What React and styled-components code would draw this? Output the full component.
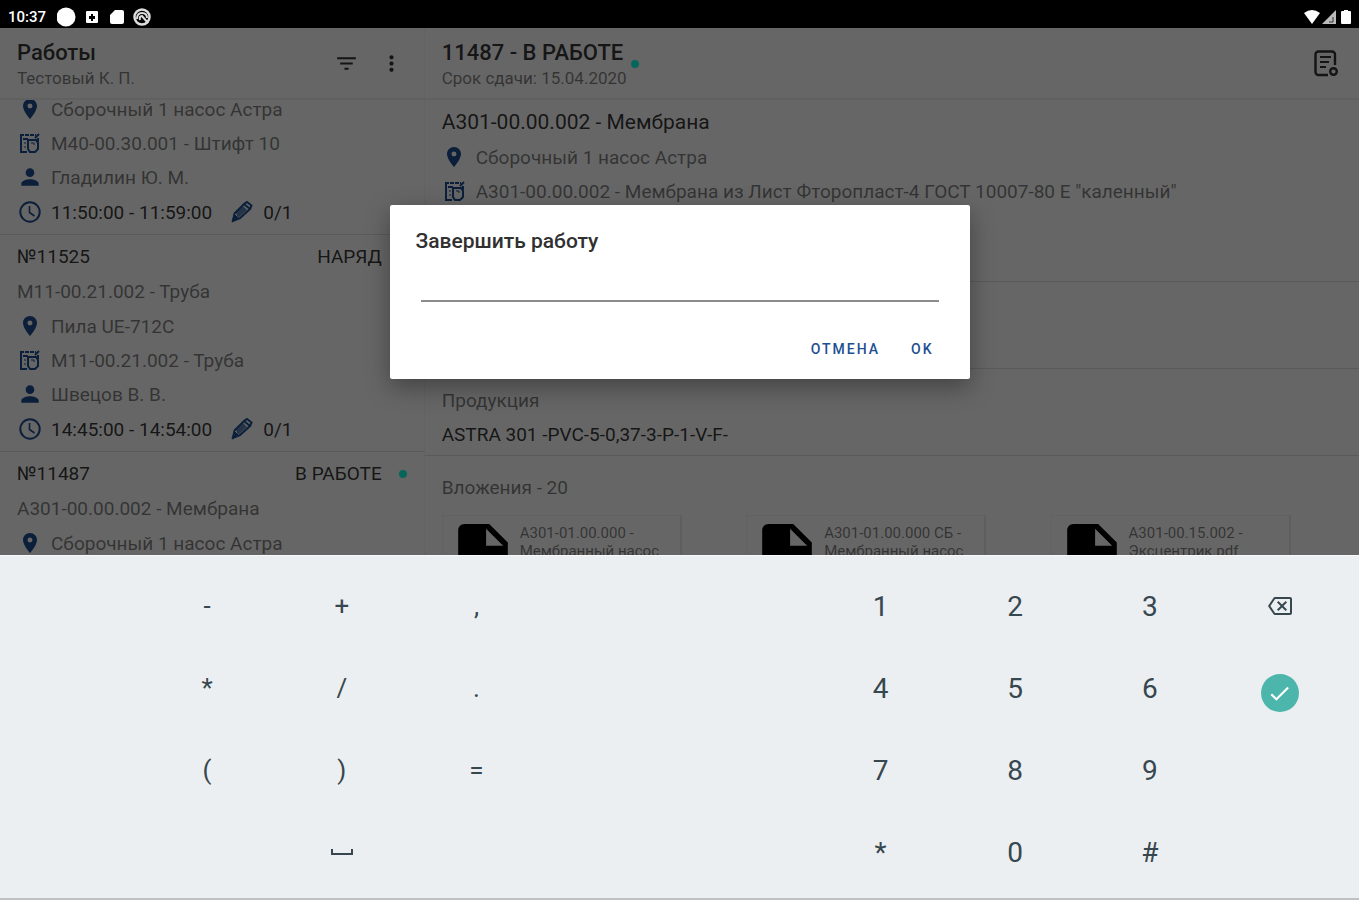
import React, { useLayoutEffect, useRef } from 'react'
import styled, { createGlobalStyle } from 'styled-components';
import { MdFilterList, MdMoreVert, MdPlace, MdPerson, MdOutlineBackspace, MdCheck } from 'react-icons/md';

const COLORS = {
    primary: '#1d4f91',
    accent: '#10ffe4',
    text: 'rgba(0, 0, 0, 0.8)',
    muted: 'rgba(0, 0, 0, 0.5)',
    line: '#e0e0e0',
    keyboard: '#eceff1',
    key: '#37474f',
};

const GlobalStyle = createGlobalStyle`
    * {
        box-sizing: border-box;
    }

    body {
        margin: 0;
        font-family: Roboto, 'Noto Sans', sans-serif;
        background: #000;
    }

    h1, h2, h3, p, ul {
        margin: 0;
        padding: 0;
        font-weight: 400;
    }

    button {
        border: 0;
        padding: 0;
        background: none;
        font-family: inherit;
        cursor: pointer;
    }

    svg {
        display: block;
        flex: none;
    }
`;

const Screen = styled.div`
    display: flex;
    flex-direction: column;
    height: 100vh;
    overflow: hidden;
`;

const StatusBar = styled.div`
    display: flex;
    align-items: center;
    justify-content: space-between;
    height: 28px;
    padding: 5px 8px 0;
    flex: none;
    background: #000;
    color: #fff;
`;

const StatusGroup = styled.div`
    display: flex;
    align-items: center;
    gap: 11px;
`;

const Clock = styled.span`
    font-size: 15px;
    font-weight: 500;
    line-height: 20px;
`;

const Workspace = styled.div`
    position: relative;
    display: flex;
    flex: 1;
    min-height: 0;
    overflow: hidden;
    background: #fff;
`;

const Sidebar = styled.aside`
    display: flex;
    flex-direction: column;
    width: 31.25%;
    min-width: 320px;
    flex: none;
    border-right: 1px solid #f4f4f4;
    min-height: 0;
`;

const Detail = styled.main`
    flex: 1;
    min-width: 0;
    overflow: hidden;
`;

const Header = styled.header`
    display: flex;
    align-items: center;
    justify-content: space-between;
    height: 72px;
    padding: 1px 20px 0 17px;
    flex: none;
    border-bottom: 2px solid #f0f0f0;
    color: ${COLORS.text};
`;

const HeaderTitle = styled.h1`
    font-size: 22px;
    font-weight: 500;
    line-height: 28px;
`;

const HeaderNote = styled.p`
    font-size: 17px;
    line-height: 22px;
    color: ${COLORS.muted};
`;

const HeaderActions = styled.div`
    display: flex;
    gap: 20px;
`;

const IconButton = styled.button`
    display: grid;
    place-items: center;
    color: #333;
`;

const Dot = styled.span`
    width: 8px;
    height: 8px;
    border-radius: 50%;
    background: ${COLORS.accent};
`;

const TitleWithDot = styled.div`
    display: flex;
    align-items: center;
    gap: 4px;
`;

const JobList = styled.ul`
    flex: 1;
    min-height: 0;
    padding-bottom: 24px;
    overflow-y: auto;
    list-style: none;
    scrollbar-width: none;
`;

const JobCard = styled.li`
    padding: 4px 17px;
    border-bottom: 1px solid ${COLORS.line};
`;

const Line = styled.div`
    display: flex;
    align-items: center;
    height: ${props => props.$height || 34}px;
    gap: 9px;
    font-size: ${props => (props.$large ? 21 : 19)}px;
    color: ${props => (props.$strong ? COLORS.text : COLORS.muted)};
    white-space: nowrap;
`;

const IconSlot = styled.span`
    display: grid;
    place-items: center;
    width: 25px;
    color: ${COLORS.primary};
`;

const Status = styled.span`
    display: flex;
    align-items: center;
    margin-left: auto;
    gap: 17px;
    padding-right: ${props => (props.$active ? 0 : 25)}px;
`;

const Count = styled.span`
    display: flex;
    align-items: center;
    gap: 9px;
    margin-left: 8px;
`;

const Section = styled.section`
    min-height: 87px;
    padding: ${props => props.$padding || '14px 17px 4px'};
    border-bottom: ${props => (props.$last ? 0 : 1)}px solid ${COLORS.line};
`;

const Files = styled.div`
    display: grid;
    grid-template-columns: repeat(3, 1fr);
    margin-top: 11px;
`;

const FileCard = styled.a`
    display: flex;
    gap: 12px;
    width: 240px;
    height: 80px;
    padding: 8px 15px;
    border: 1px solid #f4f4f4;
    border-right: 2px solid #ececec;
    color: ${COLORS.muted};
    font-size: 15px;
    line-height: 18px;
    text-decoration: none;
`;

const Scrim = styled.div`
    position: absolute;
    inset: 0;
    display: grid;
    place-items: center;
    background: rgba(0, 0, 0, 0.6);
`;

const Dialog = styled.form`
    width: 580px;
    max-width: 90%;
    padding: 20px 26px 14px;
    border-radius: 2px;
    background: #fff;
    box-shadow: 0 8px 24px rgba(0, 0, 0, 0.35);
`;

const DialogTitle = styled.label`
    display: block;
    font-size: 21px;
    font-weight: 500;
    line-height: 32px;
    color: #303030;
`;

const DialogInput = styled.input`
    display: block;
    width: calc(100% - 10px);
    height: 32px;
    margin: 13px 5px 0;
    padding: 0;
    border: 0;
    border-bottom: 2px solid #8c8c8c;
    outline: none;
    font: inherit;
    font-size: 19px;
`;

const DialogActions = styled.div`
    display: flex;
    justify-content: flex-end;
    gap: 31px;
    margin-top: 31px;
    padding-right: 10px;
`;

const DialogButton = styled.button`
    font-size: 14px;
    font-weight: 500;
    line-height: 32px;
    letter-spacing: 2px;
    color: ${COLORS.primary};
`;

const Keyboard = styled.div`
    display: grid;
    grid-template-columns: 123fr repeat(8, 135fr) 125fr;
    grid-auto-rows: 82px;
    flex: none;
    padding: 9px 17px 5px;
    border-top: 1px solid #f8f9fa;
    border-bottom: 2px solid #bfc2c4;
    background: ${COLORS.keyboard};
`;

const Key = styled.button`
    display: grid;
    place-items: center;
    font-size: ${props => (props.$digit ? 28 : 26)}px;
    color: ${COLORS.key};
`;

const EnterBadge = styled.span`
    display: grid;
    place-items: center;
    width: 38px;
    height: 38px;
    margin-top: 10px;
    border-radius: 50%;
    background: #4db6ac;
    color: #fff;
`;

const PartIcon = () => (
    <svg width="21" height="21" viewBox="0 0 21 21" fill="none" stroke="currentColor" strokeWidth="2">
        <path d="M1 2h16" strokeDasharray="4 1" />
        <path d="M2 1v19M1 19h7M4 6h5" />
        <path d="M5 10h2M5 14h2" strokeWidth="1" />
        <path d="M16 5l4-4M19 5v4" />
        <path d="M9 7h8l2 3v6l-3 3h-5l-2-3z" />
        <path d="M12 10h3v2" strokeWidth="1" />
    </svg>
);

const ClockIcon = () => (
    <svg width="22" height="22" viewBox="0 0 22 22" fill="none" stroke="currentColor" strokeWidth="2">
        <circle cx="11" cy="11" r="9.7" />
        <path d="M10.5 5v6.5l5 3.5" strokeWidth="1.6" />
    </svg>
);

const PenIcon = () => (
    <svg width="22" height="22" viewBox="0 0 22 22" fill="none" stroke="currentColor" strokeWidth="2">
        <path d="M1 21l2-8 5 5z" fill="currentColor" strokeWidth="1" />
        <path d="M3 13L13 3l6 5L8 18" />
        <path d="M13 3l3-2 4.500 3.500L19 8" />
        <path d="M5 12l7-7 4 4-9 8z" fill="currentColor" fillOpacity=".7" stroke="none" />
    </svg>
);

const FileIcon = () => (
    <svg width="50" height="62" viewBox="4 2 16 20" fill="#000">
        <path d="M6 2c-1.100 0-2 .9-2 2v16c0 1.100.9 2 2 2h12c1.100 0 2-.9 2-2V8l-6-6H6zm7 7V3.500L18.500 9H13z" />
    </svg>
);

const ReportIcon = () => (
    <svg width="25" height="27" viewBox="0 0 25 27" fill="none" stroke="currentColor" strokeWidth="2.400">
        <path d="M14 25H4.500a3 3 0 0 1-3-3V4.500a3 3 0 0 1 3-3H18a3 3 0 0 1 3 3V15" />
        <path d="M6 7h11M6 12h9M6 17h6" strokeWidth="2" />
        <circle cx="19.500" cy="21.500" r="3.300" />
    </svg>
);

const icons = {
    place: <MdPlace size={24} />,
    part: <PartIcon />,
    person: <MdPerson size={26} />,
    time: <ClockIcon />,
};

const jobs = [
    { lines: [['place', 'Сборочный 1 насос Астра'], ['part', 'M40-00.30.001 - Штифт 10'], ['person', 'Гладилин Ю. М.']], time: '11:50:00 - 11:59:00' },
    { id: '№11525', status: 'НАРЯД', name: 'М11-00.21.002 - Труба', lines: [['place', 'Пила UE-712C'], ['part', 'М11-00.21.002 - Труба'], ['person', 'Швецов В. В.']], time: '14:45:00 - 14:54:00' },
    { id: '№11487', status: 'В РАБОТЕ', active: true, name: 'А301-00.00.002 - Мембрана', lines: [['place', 'Сборочный 1 насос Астра']] },
];

const files = [
    ['А301-01.00.000  -', 'Мембранный насос'],
    ['А301-01.00.000 СБ -', 'Мембранный насос'],
    ['А301-00.15.002 -', 'Эксцентрик.pdf'],
];

// null leaves an empty cell in the pad
const keys = [
    null, '-', '+', ',', null, null, '1', '2', '3', 'del',
    null, '*', '/', '.', null, null, '4', '5', '6', 'enter',
    null, '(', ')', '=', null, null, '7', '8', '9', null,
    null, null, 'space', null, null, null, '*', '0', '#', null,
];

const InfoLine = ({ icon, children }) => (
    <Line>
        <IconSlot>{icons[icon]}</IconSlot>
        {children}
    </Line>
);

const Job = ({ job }) => (
    <JobCard>
        {job.id && (
            <>
                <Line $strong $height={35}>
                    {job.id}
                    <Status $active={job.active}>
                        {job.status}
                        {job.active && <Dot />}
                    </Status>
                </Line>
                <Line $height={35}>{job.name}</Line>
            </>
        )}
        {job.lines.map(([icon, text]) => <InfoLine key={icon} icon={icon}>{text}</InfoLine>)}
        {job.time && (
            <Line $strong $height={36}>
                <IconSlot>{icons.time}</IconSlot>
                {job.time}
                <Count>
                    <IconSlot><PenIcon /></IconSlot>
                    0/1
                </Count>
            </Line>
        )}
    </JobCard>
);

const keyFace = {
    del: <MdOutlineBackspace size={24} />,
    enter: <EnterBadge><MdCheck size={25} /></EnterBadge>,
    space: (
        <svg width="22" height="7" viewBox="0 0 22 7" fill="none" stroke="currentColor" strokeWidth="2">
            <path d="M1 0v5h20V0" />
        </svg>
    ),
};

const App = () => {
    const list = useRef(null);

    useLayoutEffect(() => {
        list.current.scrollTop = 12;
    }, []);

    return (
        <Screen>
            <GlobalStyle />
            <StatusBar>
                <StatusGroup>
                    <Clock>10:37</Clock>
                    <svg width="95" height="20" viewBox="0 0 95 20" fill="#fff">
                        <circle cx="9" cy="10" r="9.500" />
                        <path fillRule="evenodd" d="M30 4h10q1 0 1 1v10q0 1-1 1H30q-1 0-1-1V5q0-1 1-1zm4 3v2h-2v3h2v2h2v-2h2V9h-2V7z" />
                        <path d="M58 3h7q2 0 2 2v10q0 2-2 2H55q-2 0-2-2V8z" />
                        <circle cx="85" cy="10" r="7.500" fill="none" stroke="#ddd" strokeWidth="2.500" />
                        <path d="M80 12q0-6 5-6 5 0 5 5M83 13q-1-4 2-4l6 7" fill="none" stroke="#ddd" strokeWidth="2" />
                    </svg>
                </StatusGroup>
                <StatusGroup>
                    <svg width="48" height="18" viewBox="0 0 48 18" fill="#fff">
                        <path d="M1 5q8-6 16 0l-8 11z" />
                        <path d="M33 2v14H19z" fill="#bbb" />
                        <path d="M30 9v5h-4" fill="none" stroke="#333" />
                        <path d="M41 2h4v1h2q1 0 1 1v11q0 1-1 1h-8q-1 0-1-1V4q0-1 1-1h2z" />
                    </svg>
                </StatusGroup>
            </StatusBar>

            <Workspace>
                <Sidebar>
                    <Header>
                        <div>
                            <HeaderTitle>Работы</HeaderTitle>
                            <HeaderNote>Тестовый К. П.</HeaderNote>
                        </div>
                        <HeaderActions>
                            <IconButton aria-label="Фильтр"><MdFilterList size={25} /></IconButton>
                            <IconButton aria-label="Меню"><MdMoreVert size={25} /></IconButton>
                        </HeaderActions>
                    </Header>
                    <JobList ref={list}>
                        {jobs.map(job => <Job key={job.time || job.id} job={job} />)}
                    </JobList>
                </Sidebar>

                <Detail>
                    <Header>
                        <TitleWithDot>
                            <div>
                                <HeaderTitle>11487 - В РАБОТЕ</HeaderTitle>
                                <HeaderNote>Срок сдачи: 15.04.2020</HeaderNote>
                            </div>
                            <Dot />
                        </TitleWithDot>
                        <IconButton aria-label="Отчёт"><ReportIcon /></IconButton>
                    </Header>
                    <Section $padding="4px 17px 73px">
                        <Line $strong $large $height={36}>А301-00.00.002 - Мембрана</Line>
                        <InfoLine icon="place">Сборочный 1 насос Астра</InfoLine>
                        <InfoLine icon="part">А301-00.00.002 - Мембрана из Лист Фторопласт-4 ГОСТ 10007-80 Е "каленный"</InfoLine>
                    </Section>
                    <Section />
                    <Section>
                        <Line>Продукция</Line>
                        <Line $strong>ASTRA 301 -PVC-5-0,37-3-P-1-V-F-</Line>
                    </Section>
                    <Section $last $padding="14px 4px 0 17px">
                        <Line>Вложения - 20</Line>
                        <Files>
                            {files.map(([name, rest]) => (
                                <FileCard href="#" key={name}>
                                    <FileIcon />
                                    <span>{name}<br />{rest}</span>
                                </FileCard>
                            ))}
                        </Files>
                    </Section>
                </Detail>

                <Scrim>
                    <Dialog onSubmit={e => e.preventDefault()}>
                        <DialogTitle htmlFor="amount">Завершить работу</DialogTitle>
                        <DialogInput id="amount" type="text" inputMode="numeric" />
                        <DialogActions>
                            <DialogButton type="button">ОТМЕНА</DialogButton>
                            <DialogButton type="submit">OK</DialogButton>
                        </DialogActions>
                    </Dialog>
                </Scrim>
            </Workspace>

            <Keyboard>
                {keys.map((key, i) => (
                    key
                        ? <Key key={i} type="button" aria-label={key} $digit={i % 10 > 5}>{keyFace[key] || key}</Key>
                        : <span key={i} />
                ))}
            </Keyboard>
        </Screen>
    )
}

export default App
